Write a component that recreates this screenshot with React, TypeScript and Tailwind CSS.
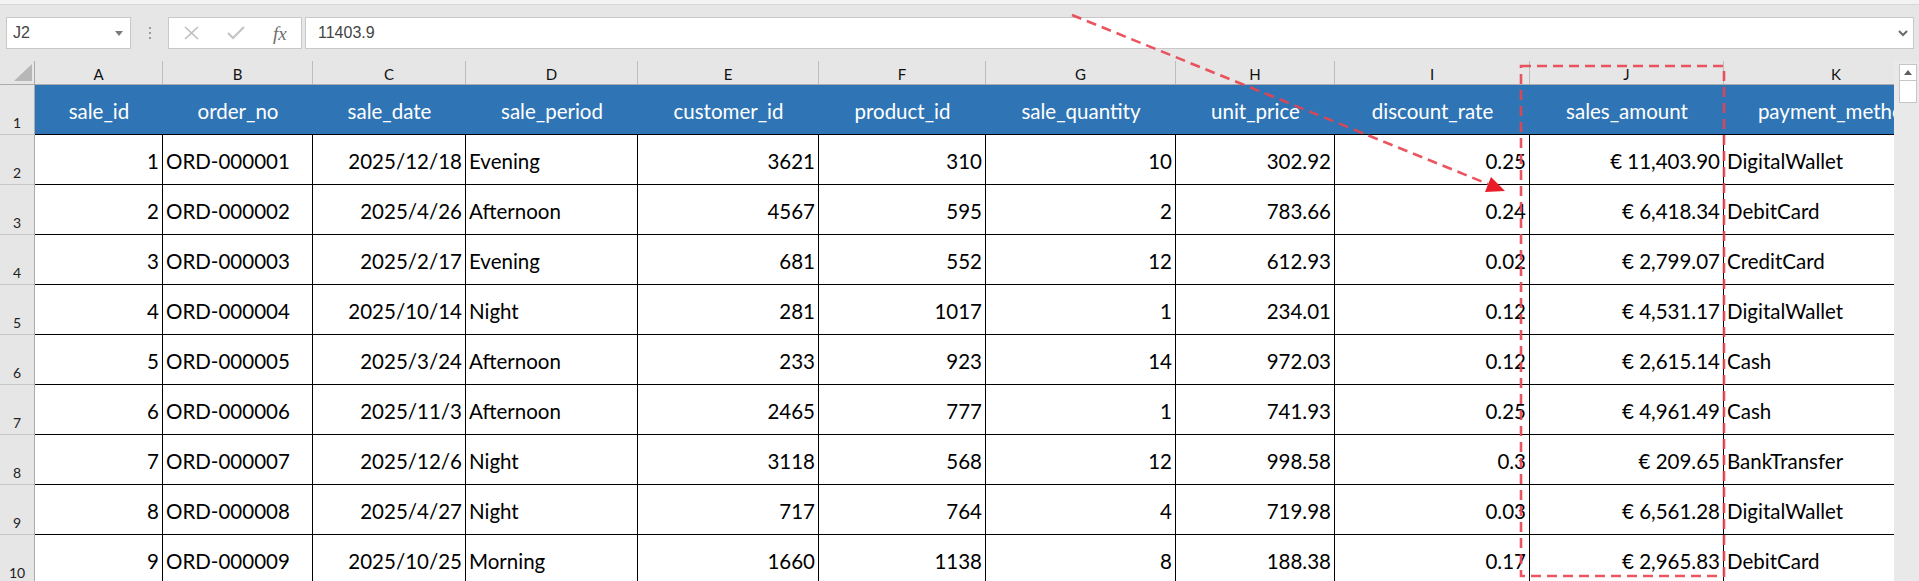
const cols = [
  { w: "w-[128px]", letter: "A", head: "sale_id", right: true },
  { w: "w-[150px]", letter: "B", head: "order_no", right: false },
  { w: "w-[153px]", letter: "C", head: "sale_date", right: true },
  { w: "w-[172px]", letter: "D", head: "sale_period", right: false },
  { w: "w-[181px]", letter: "E", head: "customer_id", right: true },
  { w: "w-[167px]", letter: "F", head: "product_id", right: true },
  { w: "w-[190px]", letter: "G", head: "sale_quantity", right: true },
  { w: "w-[159px]", letter: "H", head: "unit_price", right: true },
  { w: "w-[195px]", letter: "I", head: "discount_rate", right: true },
  { w: "w-[194px]", letter: "J", head: "sales_amount", right: true },
  { w: "w-[225px]", letter: "K", head: "payment_method", right: false },
];

const rows = [
  ["1", "ORD-000001", "2025/12/18", "Evening", "3621", "310", "10", "302.92", "0.25", "€ 11,403.90", "DigitalWallet"],
  ["2", "ORD-000002", "2025/4/26", "Afternoon", "4567", "595", "2", "783.66", "0.24", "€ 6,418.34", "DebitCard"],
  ["3", "ORD-000003", "2025/2/17", "Evening", "681", "552", "12", "612.93", "0.02", "€ 2,799.07", "CreditCard"],
  ["4", "ORD-000004", "2025/10/14", "Night", "281", "1017", "1", "234.01", "0.12", "€ 4,531.17", "DigitalWallet"],
  ["5", "ORD-000005", "2025/3/24", "Afternoon", "233", "923", "14", "972.03", "0.12", "€ 2,615.14", "Cash"],
  ["6", "ORD-000006", "2025/11/3", "Afternoon", "2465", "777", "1", "741.93", "0.25", "€ 4,961.49", "Cash"],
  ["7", "ORD-000007", "2025/12/6", "Night", "3118", "568", "12", "998.58", "0.3", "€ 209.65", "BankTransfer"],
  ["8", "ORD-000008", "2025/4/27", "Night", "717", "764", "4", "719.98", "0.03", "€ 6,561.28", "DigitalWallet"],
  ["9", "ORD-000009", "2025/10/25", "Morning", "1660", "1138", "8", "188.38", "0.17", "€ 2,965.83", "DebitCard"],
];

function RowNum({ n }: { n: number }) {
  return (
    <div className="w-[35px] h-[50px] shrink-0 border-r border-b border-r-[#ababab] border-b-[#c8c8c8] bg-[#e6e6e6] flex items-end justify-center pb-[3px] text-[14px] leading-[16px] text-[#222]">
      {n}
    </div>
  );
}

function FormulaBar() {
  return (
    <div className="flex items-center h-[32px] mt-[12px]">
      {/* name box */}
      <div className="ml-[6px] w-[125px] h-full bg-white border border-[#c8c8c8] flex items-center justify-between pl-[6px] pr-[7px]">
        <span className="text-[16px] text-[#444] font-['Liberation_Sans',sans-serif]">J2</span>
        <svg width="8" height="5" viewBox="0 0 8 5">
          <path d="M0 0h8L4 5z" fill="#7a7a7a" />
        </svg>
      </div>
      <div className="w-[37px] flex flex-col items-center gap-[3px]">
        <span className="w-[2px] h-[2px] bg-[#9c9c9c]" />
        <span className="w-[2px] h-[2px] bg-[#9c9c9c]" />
        <span className="w-[2px] h-[2px] bg-[#9c9c9c]" />
      </div>
      {/* cancel / enter / fx */}
      <div className="w-[134px] h-full bg-white border border-[#c8c8c8] flex items-center pl-[15px]">
        <svg width="15" height="14" viewBox="0 0 15 14">
          <path d="M1 1l13 12M14 1L1 13" stroke="#bdbdbd" strokeWidth="1.6" />
        </svg>
        <svg width="18" height="14" viewBox="0 0 18 14" className="ml-[28px]">
          <path d="M1 7l5 5L17 1" stroke="#c4c4c4" strokeWidth="2.2" fill="none" />
        </svg>
        <span className="ml-[28px] text-[19px] italic text-[#6e6e6e] font-['Liberation_Serif',serif] leading-none">fx</span>
      </div>
      {/* formula input */}
      <div className="ml-[3px] w-[1609px] h-full bg-white border border-[#c8c8c8] flex items-center justify-between pl-[12px] pr-[5px]">
        <span className="text-[16px] text-[#444] font-['Liberation_Sans',sans-serif]">11403.9</span>
        <svg width="10" height="7" viewBox="0 0 10 7">
          <path d="M1 1l4 4 4-4" stroke="#6a6a6a" strokeWidth="2" fill="none" />
        </svg>
      </div>
    </div>
  );
}

function Overlay() {
  return (
    <svg className="absolute inset-0 pointer-events-none" width="1919" height="581" viewBox="0 0 1919 581">
      <rect x="1521" y="66" width="203" height="510" fill="none" stroke="#e8434f" strokeOpacity="0.9" strokeWidth="2.6" strokeDasharray="10 6" />
      <line x1="1072" y1="15" x2="1488" y2="184" stroke="#e8434f" strokeOpacity="0.9" strokeWidth="2.6" strokeDasharray="10 6" />
      <polygon points="1505,191 1485,192 1491,177" fill="#e91d27" />
    </svg>
  );
}

export default function App() {
  return (
    <div className="relative w-[1919px] h-[581px] overflow-hidden bg-[#e6e6e6] font-['Lato',sans-serif] text-black">
      <div className="h-[5px] bg-[#f3f3f3] border-b border-[#d6d6d6]" />
      <FormulaBar />

      <div className="flex mt-[12px]">
        {/* grid */}
        <div className="w-[1894px] shrink-0 overflow-hidden">
          {/* column letters */}
          <div className="flex h-[24px] border-b border-[#ababab]">
            <div className="w-[35px] shrink-0 border-r border-[#ababab] relative">
              <svg className="absolute left-[14px] top-[3px]" width="18" height="17" viewBox="0 0 18 17">
                <path d="M18 0v17H0z" fill="#b7b7b7" />
              </svg>
            </div>
            {cols.map((c) => (
              <div key={c.letter} className={`${c.w} shrink-0 border-r border-[#bdbdbd] text-center text-[15px] leading-[20px] pt-[3px] text-[#111]`}>
                {c.letter}
              </div>
            ))}
          </div>

          {/* header row */}
          <div className="flex">
            <RowNum n={1} />
            {cols.map((c) => (
              <div key={c.head} className={`${c.w} shrink-0 h-[50px] border-b border-black bg-[#2f75b5] text-white text-center text-[20.5px] leading-[20px] pt-[16px] whitespace-nowrap`}>
                {c.head}
              </div>
            ))}
          </div>

          {/* data rows */}
          {rows.map((r, i) => (
            <div key={i} className="flex">
              <RowNum n={i + 2} />
              {cols.map((c, j) => (
                <div
                  key={j}
                  className={`${c.w} shrink-0 h-[50px] border-b border-r border-black bg-white text-[20.5px] leading-[20px] pt-[16px] whitespace-nowrap overflow-hidden ${c.right ? "text-right pr-[3px]" : "text-left pl-[3px]"}`}
                >
                  {r[j]}
                </div>
              ))}
            </div>
          ))}
        </div>

        {/* vertical scrollbar */}
        <div className="flex-1 h-[520px] bg-[#e9e9e9] pl-[5px] pt-[3px]">
          <div className="w-[18px] h-[17px] bg-white border border-[#c6c6c6] flex items-center justify-center">
            <svg width="8" height="5" viewBox="0 0 8 5">
              <path d="M4 0l4 5H0z" fill="#606060" />
            </svg>
          </div>
          <div className="w-[18px] h-[22px] bg-white border border-t-0 border-[#c6c6c6]" />
        </div>
      </div>

      <Overlay />
    </div>
  );
}
